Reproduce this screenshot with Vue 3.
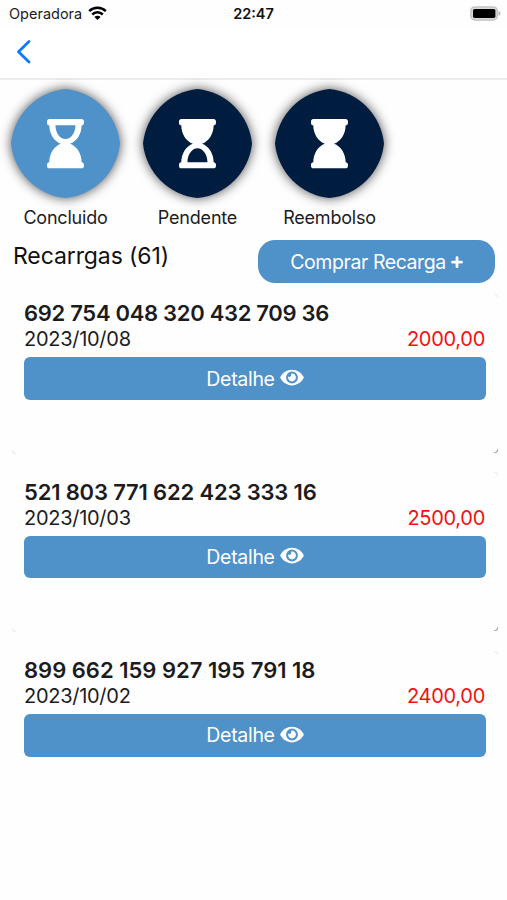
<template>
  <div class="screen">
    <div class="status-bar">
      <div class="carrier">
        <span>Operadora</span>
        <svg class="wifi" width="19" height="14" viewBox="0 0 19 14" fill="none" stroke="#000" stroke-width="2.5">
          <path d="M1.2 5.2a12 12 0 0 1 16.6 0" />
          <path d="M4.2 8.5a7.6 7.6 0 0 1 10.6 0" />
          <path d="M9.5 14L6.4 11a4.4 4.4 0 0 1 6.2 0z" fill="#000" stroke="none" />
        </svg>
      </div>
      <span class="clock">22:47</span>
      <svg class="battery" width="31" height="15" viewBox="0 0 31 15">
        <rect x="0.9" y="0.9" width="26.4" height="13" rx="4" fill="#dcdcdc" stroke="#c4c4c4" stroke-width="1.5" />
        <rect x="3" y="2.9" width="22.4" height="9" rx="1.6" fill="#000" />
        <path d="M28.6 5v4.8c1-.4 1.8-1.3 1.8-2.4s-.8-2-1.8-2.4z" fill="#b0b0b0" />
      </svg>
    </div>

    <header class="nav-bar">
      <button class="back" aria-label="Voltar">
        <svg width="16" height="26" viewBox="0 0 16 26" fill="none" stroke="#0a7aff" stroke-width="2.8" stroke-linecap="round" stroke-linejoin="round">
          <polyline points="14 2.5 3.5 12.7 14 23" />
        </svg>
      </button>
    </header>

    <nav class="tabs">
      <button v-for="tab in tabs" :key="tab.id" class="tab" @click="active = tab.id">
        <svg class="bubble" :class="{ active: active === tab.id }" width="109" height="109" viewBox="0 0 110 110">
          <path class="shape" d="M55 0A61.5 61.5 0 0 1 110 55A61.5 61.5 0 0 1 55 110A61.5 61.5 0 0 1 0 55A61.5 61.5 0 0 1 55 0z" />
          <path class="glass" transform="translate(36.3 30.3) scale(.0972)" fill-rule="evenodd" :d="hourglass + tab.hole" />
        </svg>
        <span class="tab-label">{{ tab.label }}</span>
      </button>
    </nav>

    <div class="toolbar">
      <h1 class="title">Recarrgas (61)</h1>
      <button class="buy">
        <span>Comprar Recarga</span>
        <svg width="12" height="12" viewBox="0 0 12 12" stroke="#fff" stroke-width="2.8" stroke-linecap="round">
          <path d="M6 1.7v9M1.5 6.2h9" />
        </svg>
      </button>
    </div>

    <main class="list">
      <article v-for="item in items" :key="item.code" class="card">
        <div class="code" :style="{ letterSpacing: item.spacing }">{{ item.code }}</div>
        <div class="row">
          <span class="date">{{ item.date }}</span>
          <span class="amount">{{ item.amount }}</span>
        </div>
        <button class="detail">
          <span>Detalhe</span>
          <svg width="24" height="21" viewBox="0 0 576 512" fill="#fff">
            <path d="M572.52 241.4C518.29 135.59 410.93 64 288 64S57.68 135.64 3.48 241.41a32.35 32.35 0 0 0 0 29.19C57.71 376.41 165.07 448 288 448s230.32-71.64 284.52-177.41a32.35 32.35 0 0 0 0-29.19zM288 400a144 144 0 1 1 144-144 143.93 143.93 0 0 1-144 144zm0-240a95.31 95.31 0 0 0-25.31 3.79 47.85 47.85 0 0 1-66.9 66.9A95.78 95.78 0 1 0 288 160z" />
          </svg>
        </button>
        <i class="corner top"></i>
        <i class="corner left"></i>
        <i class="corner right"></i>
      </article>
    </main>
  </div>
</template>

<script setup>
import { ref } from 'vue'

const active = ref('done')

const hourglass = 'M360 64c13.255 0 24-10.745 24-24V24c0-13.255-10.745-24-24-24H24C10.745 0 0 10.745 0 24v16c0 13.255 10.745 24 24 24 0 90.965 51.016 167.734 120.842 192C75.016 280.266 24 357.035 24 448c-13.255 0-24 10.745-24 24v16c0 13.255 10.745 24 24 24h336c13.255 0 24-10.745 24-24v-16c0-13.255-10.745-24-24-24 0-90.965-51.016-167.734-120.842-192C308.984 231.734 360 154.965 360 64z'

const tabs = [
  { id: 'done', label: 'Concluido', hole: 'M192 208c-57.787 0-104-66.518-104-144h208c0 77.945-46.51 144-104 144z' },
  { id: 'pending', label: 'Pendente', hole: 'M296 448H88c0-77.458 46.204-144 104-144 57.786 0 104 66.517 104 144z' },
  { id: 'refund', label: 'Reembolso', hole: '' },
]

const items = [
  { code: '692 754 048 320 432 709 36', date: '2023/10/08', amount: '2000,00', spacing: '-.3px' },
  { code: '521 803 771 622 423 333 16', date: '2023/10/03', amount: '2500,00', spacing: '-.17px' },
  { code: '899 662 159 927 195 791 18', date: '2023/10/02', amount: '2400,00', spacing: '0' },
]
</script>

<style>
body {
  margin: 0;
  background: #fff;
}
</style>

<style scoped>
.screen {
  width: 507px; height: 900px;
  overflow: hidden;
  background: #fefefe;
  color: #1c1c1e;
  font-family: Inter, "Liberation Sans", sans-serif;
}
button {
  padding: 0; border: 0;
  background: none;
  color: inherit; font: inherit;
  cursor: pointer;
}

.status-bar {
  display: grid;
  grid-template-columns: 1fr auto 1fr;
  align-items: center;
  height: 27px;
  padding: 0 6px 0 9px;
  font-size: 14.5px;
}
.carrier { display: flex; align-items: center; gap: 6px; }
.wifi { margin-top: -2px; }
.clock { margin-right: 3px; font-weight: 600; color: #111; }
.battery { justify-self: end; }

.nav-bar {
  display: flex; align-items: center;
  box-sizing: border-box;
  height: 53px;
  padding: 0 0 2px 15px;
  border-bottom: 2px solid #ededed;
  background: #fff;
}
.back { display: flex; }

.tabs {
  display: flex;
  gap: 22px;
  padding: 9px 0 0 10.5px;
}
.tab {
  display: flex; flex-direction: column; align-items: center;
  width: 110px;
}
.bubble {
  display: block;
  overflow: visible;
  margin-right: 1px;
  filter: drop-shadow(0 0 6px rgba(0, 0, 0, .7));
}
.shape { fill: #001d40; }
.active .shape { fill: #4f91c9; }
.glass { fill: #fff; }
.tab-label {
  margin-top: 8px;
  font-size: 18px; line-height: 24px;
  letter-spacing: -.2px;
}

.toolbar {
  display: flex; justify-content: space-between;
  padding: 10px 12px 0 13px;
}
.title {
  margin: 1px 0 0;
  font-size: 23px; font-weight: 400; line-height: 30px;
  letter-spacing: -.1px;
  color: #111;
}
.buy {
  display: flex; align-items: center; justify-content: center;
  gap: 5px;
  box-sizing: border-box;
  width: 237px; height: 43px;
  padding-top: 1px;
  border-radius: 17px;
  background: #4f91c9;
  color: #fff;
  font-size: 19.5px; letter-spacing: -.43px;
}

.list {
  display: flex; flex-direction: column;
  gap: 18.3px;
  padding: 11px 8px 0 12px;
}
.card {
  position: relative;
  box-sizing: border-box;
  height: 160px;
  padding: 6.3px 13px 0 12px;
}
.code {
  font-size: 22px; font-weight: 600; line-height: 26px;
}
.row {
  display: flex; justify-content: space-between;
  padding: 0 1px 0 0;
  font-size: 20px; line-height: 26px;
  letter-spacing: -.28px;
}
.amount { color: #f51010; }
.detail {
  display: flex; align-items: center; justify-content: center;
  gap: 5px;
  width: 100%; height: 42.7px;
  margin-top: 5px;
  border-radius: 6px;
  background: #4f91c9;
  color: #fff;
  font-size: 19.5px; letter-spacing: -.3px;
}
.detail svg { margin-top: -2px; }

/* faint traces of the card outline */
.corner {
  position: absolute;
  width: 3px; height: 3px;
  border: 0 solid #ededed;
}
.top { top: 0; right: 1px; border-width: 1px 1px 0 0; border-top-right-radius: 3px; }
.left { bottom: 0; left: 0; border-width: 0 0 1px 1px; border-bottom-left-radius: 3px; }
.right { bottom: 1px; right: 1px; border-width: 0 1px 1px 0; border-color: #aaa; border-bottom-right-radius: 3px; }
.card:last-child .left,
.card:last-child .right { display: none; }
</style>
